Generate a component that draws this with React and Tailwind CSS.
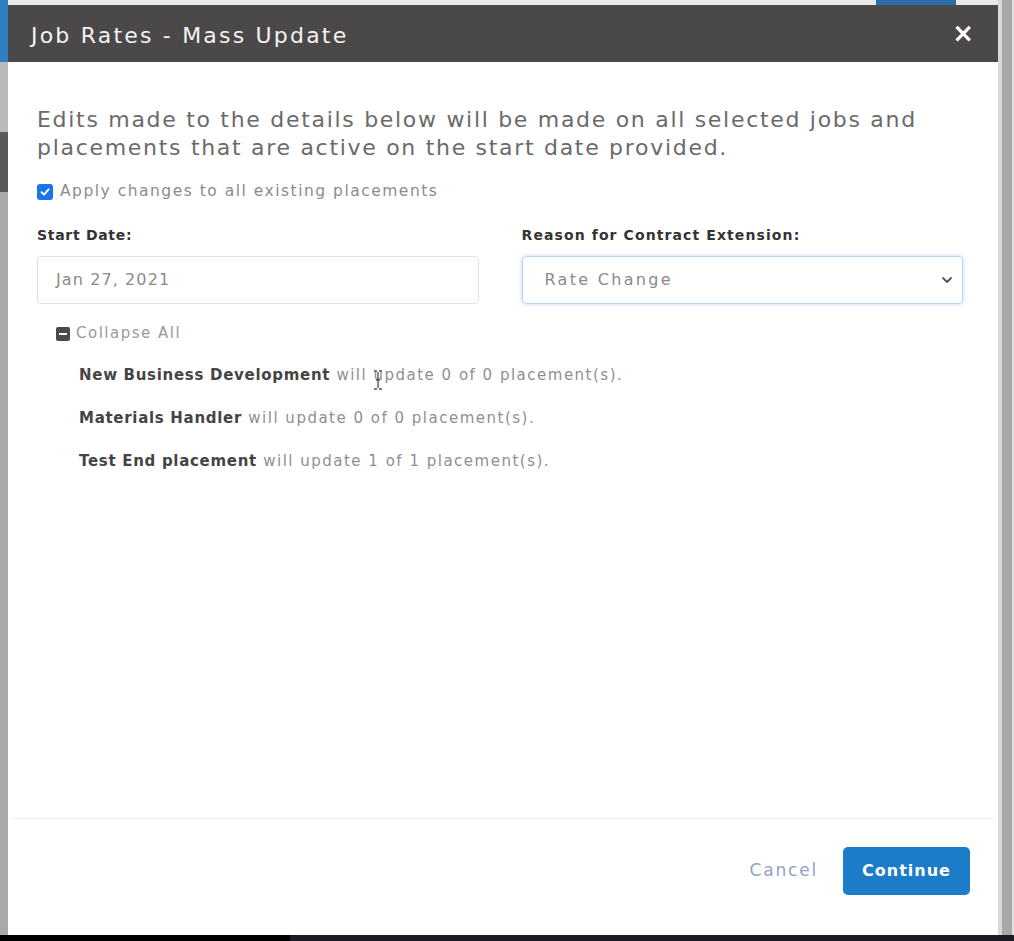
import React from "react";

const font = { fontFamily: '"DejaVu Sans", Verdana, sans-serif' };

export default function App() {
  return (
    <div className="w-[1014px] h-[941px] bg-[#b3b3b3] flex flex-col overflow-hidden" style={font}>
      <div className="flex flex-1 min-h-0">
        {/* left page strip */}
        <div className="w-[8px] flex flex-col bg-[#a9a9a9]">
          <div className="h-[62px] bg-[#2c7fc0]" />
          <div className="h-[70px] bg-[#b9b9b9]" />
          <div className="h-[60px] bg-[#595959]" />
          <div className="flex-1 bg-[#a9a9a9]" />
        </div>
        {/* dialog column */}
        <div className="w-[990px] flex flex-col">
          <div className="h-[5px] bg-[#e9e9e9] flex justify-end pr-[42px]">
            <div className="w-[80px] h-[5px] bg-[#2d6ea8]" />
          </div>
          <div className="relative flex-1 flex flex-col bg-white">
            {/* header */}
            <div className="h-[57px] bg-[#4a4849] flex items-center justify-between pl-[23px] pr-[24px]">
              <span className="text-[#f4f4f4] text-[22px] tracking-[2.2px] leading-none mt-[4px]">Job Rates - Mass Update</span>
              <span className="text-white text-[26px] font-bold leading-none mt-[-2px]">×</span>
            </div>
            {/* body */}
            <div className="flex-1 flex flex-col pl-[29px] pr-[35px] pt-[44px]">
              <p className="text-[#6a6a6a] text-[22px] leading-[28px] tracking-[1.7px]">
                Edits made to the details below will be made on all selected jobs and placements that are active on the start date provided.
              </p>
              <label className="flex items-center gap-[7px] mt-[18px]">
                <span className="w-[16px] h-[16px] rounded-[3px] bg-[#1a73e8] flex items-center justify-center">
                  <svg width="12" height="12" viewBox="0 0 12 12">
                    <path d="M2.5 6.2 L5 8.6 L9.6 3.4" stroke="white" strokeWidth="2" fill="none" strokeLinecap="round" strokeLinejoin="round" />
                  </svg>
                </span>
                <span className="text-[#8c8c8c] text-[15.5px] tracking-[1.5px]">Apply changes to all existing placements</span>
              </label>
              <div className="grid grid-cols-2 gap-[43px] mt-[22px]">
                <div className="flex flex-col">
                  <span className="text-[#333] text-[14px] font-bold tracking-[0.7px]">Start Date:</span>
                  <div className="mt-[10px] h-[48px] border border-[#e2e2e2] rounded-[4px] flex items-center pl-[18px] text-[#8a8a8a] text-[16px] tracking-[1.1px]">
                    Jan 27, 2021
                  </div>
                </div>
                <div className="flex flex-col">
                  <span className="text-[#333] text-[14px] font-bold tracking-[1.1px]">Reason for Contract Extension:</span>
                  <div className="mt-[10px] h-[48px] border border-[#b9d3ef] rounded-[4px] shadow-[0_0_4px_rgba(80,140,220,0.35)] flex items-center justify-between pl-[22px] pr-[8px] text-[#8a8a8a] text-[16px]">
                    <span className="tracking-[2.3px]">Rate Change</span>
                    <svg width="14" height="14" viewBox="0 0 14 14">
                      <path d="M3 5 L7 9 L11 5" stroke="#555" strokeWidth="1.8" fill="none" strokeLinecap="round" strokeLinejoin="round" />
                    </svg>
                  </div>
                </div>
              </div>
              <div className="flex items-center gap-[6px] mt-[18px] ml-[19px]">
                <span className="w-[14px] h-[14px] rounded-[2px] bg-[#4a4a4a] flex items-center justify-center">
                  <span className="w-[8px] h-[2px] bg-white" />
                </span>
                <span className="text-[#9a9a9a] text-[15px] tracking-[1.5px]">Collapse All</span>
              </div>
              <div className="flex flex-col ml-[42px] mt-[18px] gap-[19px] text-[15px] leading-[24px]">
                <div>
                  <span className="text-[#444] font-bold tracking-[0.7px]">New Business Development</span>
                  <span className="text-[#8f8f8f] tracking-[1.5px]"> will update 0 of 0 placement(s).</span>
                </div>
                <div>
                  <span className="text-[#444] font-bold tracking-[0.7px]">Materials Handler</span>
                  <span className="text-[#8f8f8f] tracking-[1.5px]"> will update 0 of 0 placement(s).</span>
                </div>
                <div>
                  <span className="text-[#444] font-bold tracking-[0.7px]">Test End placement</span>
                  <span className="text-[#8f8f8f] tracking-[1.5px]"> will update 1 of 1 placement(s).</span>
                </div>
              </div>
            </div>
            {/* footer */}
            <div className="mx-[4px] border-t border-[#f0f0f0] h-[117px] flex items-center justify-end pr-[24px] pb-[12px] gap-[25px]">
              <span className="text-[#8ea3c2] text-[17px] tracking-[1.8px]">Cancel</span>
              <span className="w-[127px] h-[48px] rounded-[5px] bg-[#1b7dc9] text-white text-[16px] font-bold tracking-[1px] flex items-center justify-center">
                Continue
              </span>
            </div>
            {/* mouse I-beam cursor */}
            <svg className="absolute left-[364px] top-[365px]" width="12" height="20" viewBox="0 0 12 20">
              <path d="M2 1 H5 M7 1 H10 M6 2 V18 M2 19 H5 M7 19 H10 M4 10 H8" stroke="#555" strokeWidth="1.4" fill="none" />
            </svg>
          </div>
        </div>
        {/* right page strip */}
        <div className="w-[16px] flex">
          <div className="w-[4px] bg-[#d9d9d9]" />
          <div className="w-[10px] bg-[#a8a8a8]" />
          <div className="w-[2px] bg-[#e0e0e0]" />
        </div>
      </div>
      <div className="h-[6px] flex">
        <div className="w-[290px] bg-black" />
        <div className="flex-1 bg-[#1c1c22]" />
      </div>
    </div>
  );
}
